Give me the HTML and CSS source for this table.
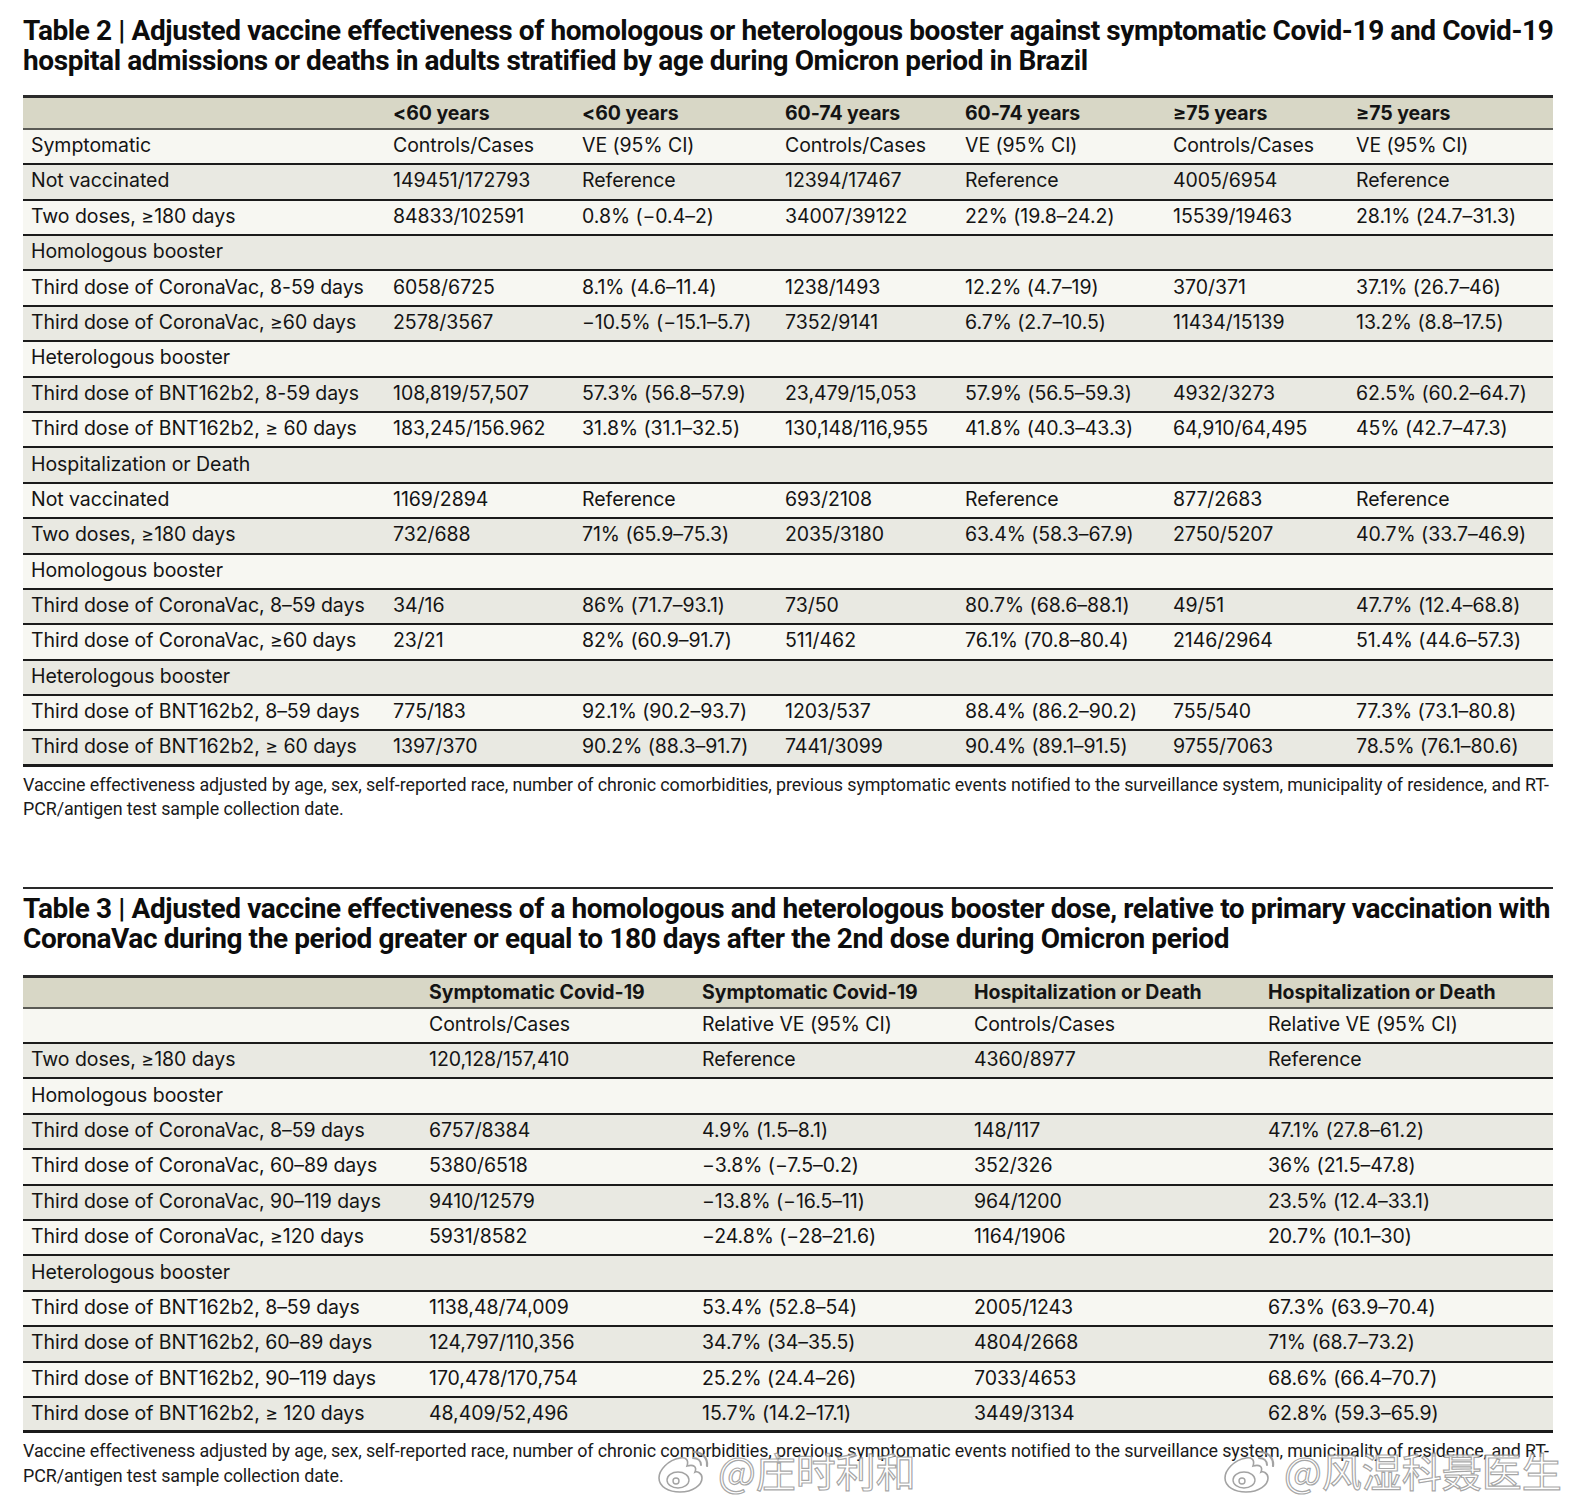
FILE: index.html
```html
<!DOCTYPE html>
<html lang="en">
<head>
<meta charset="utf-8">
<title>Tables 2 and 3</title>
<link rel="stylesheet" href="styles.css">
</head>
<body>
<div class="page">
  <section class="block block-t2">
    <h2 class="title">Table 2 | Adjusted vaccine effectiveness of homologous or heterologous booster against symptomatic Covid-19 and Covid-19<br>hospital admissions or deaths in adults stratified by age during Omicron period in Brazil</h2>
    <div class="tbl t2">
      <div class="row head"><span></span><span>&lt;60 years</span><span>&lt;60 years</span><span>60-74 years</span><span>60-74 years</span><span>≥75 years</span><span>≥75 years</span></div>
      <div class="row"><span>Symptomatic</span><span>Controls/Cases</span><span>VE (95% CI)</span><span>Controls/Cases</span><span>VE (95% CI)</span><span>Controls/Cases</span><span>VE (95% CI)</span></div>
      <div class="row"><span>Not vaccinated</span><span>149451/172793</span><span>Reference</span><span>12394/17467</span><span>Reference</span><span>4005/6954</span><span>Reference</span></div>
      <div class="row"><span>Two doses, ≥180 days</span><span>84833/102591</span><span>0.8% (−0.4–2)</span><span>34007/39122</span><span>22% (19.8–24.2)</span><span>15539/19463</span><span>28.1% (24.7–31.3)</span></div>
      <div class="row"><span>Homologous booster</span></div>
      <div class="row"><span>Third dose of CoronaVac, 8-59 days</span><span>6058/6725</span><span>8.1% (4.6–11.4)</span><span>1238/1493</span><span>12.2% (4.7–19)</span><span>370/371</span><span>37.1% (26.7–46)</span></div>
      <div class="row"><span>Third dose of CoronaVac, ≥60 days</span><span>2578/3567</span><span>−10.5% (−15.1–5.7)</span><span>7352/9141</span><span>6.7% (2.7–10.5)</span><span>11434/15139</span><span>13.2% (8.8–17.5)</span></div>
      <div class="row"><span>Heterologous booster</span></div>
      <div class="row"><span>Third dose of BNT162b2, 8-59 days</span><span>108,819/57,507</span><span>57.3% (56.8–57.9)</span><span>23,479/15,053</span><span>57.9% (56.5–59.3)</span><span>4932/3273</span><span>62.5% (60.2–64.7)</span></div>
      <div class="row"><span>Third dose of BNT162b2, ≥ 60 days</span><span>183,245/156.962</span><span>31.8% (31.1–32.5)</span><span>130,148/116,955</span><span>41.8% (40.3–43.3)</span><span>64,910/64,495</span><span>45% (42.7–47.3)</span></div>
      <div class="row"><span>Hospitalization or Death</span></div>
      <div class="row"><span>Not vaccinated</span><span>1169/2894</span><span>Reference</span><span>693/2108</span><span>Reference</span><span>877/2683</span><span>Reference</span></div>
      <div class="row"><span>Two doses, ≥180 days</span><span>732/688</span><span>71% (65.9–75.3)</span><span>2035/3180</span><span>63.4% (58.3–67.9)</span><span>2750/5207</span><span>40.7% (33.7–46.9)</span></div>
      <div class="row"><span>Homologous booster</span></div>
      <div class="row"><span>Third dose of CoronaVac, 8–59 days</span><span>34/16</span><span>86% (71.7–93.1)</span><span>73/50</span><span>80.7% (68.6–88.1)</span><span>49/51</span><span>47.7% (12.4–68.8)</span></div>
      <div class="row"><span>Third dose of CoronaVac, ≥60 days</span><span>23/21</span><span>82% (60.9–91.7)</span><span>511/462</span><span>76.1% (70.8–80.4)</span><span>2146/2964</span><span>51.4% (44.6–57.3)</span></div>
      <div class="row"><span>Heterologous booster</span></div>
      <div class="row"><span>Third dose of BNT162b2, 8–59 days</span><span>775/183</span><span>92.1% (90.2–93.7)</span><span>1203/537</span><span>88.4% (86.2–90.2)</span><span>755/540</span><span>77.3% (73.1–80.8)</span></div>
      <div class="row last"><span>Third dose of BNT162b2, ≥ 60 days</span><span>1397/370</span><span>90.2% (88.3–91.7)</span><span>7441/3099</span><span>90.4% (89.1–91.5)</span><span>9755/7063</span><span>78.5% (76.1–80.6)</span></div>
    </div>
    <p class="note">Vaccine effectiveness adjusted by age, sex, self-reported race, number of chronic comorbidities, previous symptomatic events notified to the surveillance system, municipality of residence, and RT-<br>PCR/antigen test sample collection date.</p>
  </section>

  <section class="block block-t3">
    <h2 class="title">Table 3 | Adjusted vaccine effectiveness of a homologous and heterologous booster dose, relative to primary vaccination with<br>CoronaVac during the period greater or equal to 180 days after the 2nd dose during Omicron period</h2>
    <div class="tbl t3">
      <div class="row head"><span></span><span>Symptomatic Covid-19</span><span>Symptomatic Covid-19</span><span>Hospitalization or Death</span><span>Hospitalization or Death</span></div>
      <div class="row"><span></span><span>Controls/Cases</span><span>Relative VE (95% CI)</span><span>Controls/Cases</span><span>Relative VE (95% CI)</span></div>
      <div class="row"><span>Two doses, ≥180 days</span><span>120,128/157,410</span><span>Reference</span><span>4360/8977</span><span>Reference</span></div>
      <div class="row"><span>Homologous booster</span></div>
      <div class="row"><span>Third dose of CoronaVac, 8–59 days</span><span>6757/8384</span><span>4.9% (1.5–8.1)</span><span>148/117</span><span>47.1% (27.8–61.2)</span></div>
      <div class="row"><span>Third dose of CoronaVac, 60–89 days</span><span>5380/6518</span><span>−3.8% (−7.5–0.2)</span><span>352/326</span><span>36% (21.5–47.8)</span></div>
      <div class="row"><span>Third dose of CoronaVac, 90–119 days</span><span>9410/12579</span><span>−13.8% (−16.5–11)</span><span>964/1200</span><span>23.5% (12.4–33.1)</span></div>
      <div class="row"><span>Third dose of CoronaVac, ≥120 days</span><span>5931/8582</span><span>−24.8% (−28–21.6)</span><span>1164/1906</span><span>20.7% (10.1–30)</span></div>
      <div class="row"><span>Heterologous booster</span></div>
      <div class="row"><span>Third dose of BNT162b2, 8–59 days</span><span>1138,48/74,009</span><span>53.4% (52.8–54)</span><span>2005/1243</span><span>67.3% (63.9–70.4)</span></div>
      <div class="row"><span>Third dose of BNT162b2, 60–89 days</span><span>124,797/110,356</span><span>34.7% (34–35.5)</span><span>4804/2668</span><span>71% (68.7–73.2)</span></div>
      <div class="row"><span>Third dose of BNT162b2, 90–119 days</span><span>170,478/170,754</span><span>25.2% (24.4–26)</span><span>7033/4653</span><span>68.6% (66.4–70.7)</span></div>
      <div class="row last"><span>Third dose of BNT162b2, ≥ 120 days</span><span>48,409/52,496</span><span>15.7% (14.2–17.1)</span><span>3449/3134</span><span>62.8% (59.3–65.9)</span></div>
    </div>
    <p class="note">Vaccine effectiveness adjusted by age, sex, self-reported race, number of chronic comorbidities, previous symptomatic events notified to the surveillance system, municipality of residence, and RT-<br>PCR/antigen test sample collection date.</p>
  </section>

  <div class="wm wm1">
    <svg class="wb" viewBox="0 0 56 48" width="56" height="48" aria-hidden="true">
      <path d="M24 12 C12 14 3 24 3 32 C3 41 13 46 24 46 C37 46 46 39 46 32 C46 27 41 25 39 26 C41 21 38 18 31 20 C33 14 30 11 24 12 Z" fill="#fff" stroke="#9a9a9a" stroke-width="1.6"/>
      <ellipse cx="22" cy="34" rx="11" ry="8" fill="#fff" stroke="#9a9a9a" stroke-width="1.4"/>
      <circle cx="20" cy="35" r="3" fill="none" stroke="#9a9a9a" stroke-width="1.4"/>
      <path d="M38 6 C46 6 52 12 51 20" fill="none" stroke="#9a9a9a" stroke-width="2.2" stroke-linecap="round"/>
      <path d="M37 12 C42 12 45 15 45 19" fill="none" stroke="#9a9a9a" stroke-width="2" stroke-linecap="round"/>
    </svg>
    <span class="wmtext">@庄时利和</span>
  </div>
  <div class="wm wm2">
    <svg class="wb" viewBox="0 0 56 48" width="56" height="48" aria-hidden="true">
      <path d="M24 12 C12 14 3 24 3 32 C3 41 13 46 24 46 C37 46 46 39 46 32 C46 27 41 25 39 26 C41 21 38 18 31 20 C33 14 30 11 24 12 Z" fill="#fff" stroke="#9a9a9a" stroke-width="1.6"/>
      <ellipse cx="22" cy="34" rx="11" ry="8" fill="#fff" stroke="#9a9a9a" stroke-width="1.4"/>
      <circle cx="20" cy="35" r="3" fill="none" stroke="#9a9a9a" stroke-width="1.4"/>
      <path d="M38 6 C46 6 52 12 51 20" fill="none" stroke="#9a9a9a" stroke-width="2.2" stroke-linecap="round"/>
      <path d="M37 12 C42 12 45 15 45 19" fill="none" stroke="#9a9a9a" stroke-width="2" stroke-linecap="round"/>
    </svg>
    <span class="wmtext">@风湿科聂医生</span>
  </div>
</div>
</body>
</html>
```

FILE: styles.css
```css
* { box-sizing: border-box; }
html, body { margin: 0; padding: 0; background: #fff; }
body {
  color: #141414;
  font-family: "Inter", "Noto Sans", sans-serif;
}
.page {
  position: relative;
  width: 1586px;
  height: 1512px;
  padding: 16px 33px 0 23px;
  overflow: hidden;
}
.title {
  margin: 0;
  font-family: "Roboto", "Liberation Sans", sans-serif;
  font-weight: 700;
  font-size: 28px;
  line-height: 30.4px;
  letter-spacing: -0.4px;
  color: #0d0d0d;
  white-space: nowrap;
}
.block-t2 .title { margin-bottom: 18px; }
.block-t3 {
  margin-top: 65px;
  border-top: 2px solid #2a2a2a;
  padding-top: 5px;
}
.block-t3 .title { margin-bottom: 20px; }

.tbl {
  width: 1530px;
  border-top: 3px solid #2b2b2b;
}
.row {
  display: grid;
  height: 35.4px;
  padding-bottom: 3px;
  align-items: center;
  border-bottom: 2px solid #1b1b1b;
  font-size: 19.5px;
  letter-spacing: -0.05px;
  font-weight: 400;
  white-space: nowrap;
}
.row > span { padding-left: 8px; }
.t2 .row { grid-template-columns: 362px 189px 203px 180px 208px 183px 205px; }
.t3 .row { grid-template-columns: 398px 273px 272px 294px 293px; }
.row:nth-child(even) { background: #f7f7f2; }
.row:nth-child(odd) { background: #e9e9e2; }
.row.head {
  height: 32px;
  padding-bottom: 0;
  background: #d8d7c6;
  border-bottom: 2px solid #5a5a55;
  font-weight: 700;
}
.t3 .row.head { height: 31px; }
.row.last { border-bottom: 3px solid #1b1b1b; }

.note {
  margin: 6px 0 0;
  font-family: "Roboto", "Liberation Sans", sans-serif;
  font-size: 17.9px;
  line-height: 24.5px;
  letter-spacing: -0.1px;
  color: #1a1a1a;
  white-space: nowrap;
}

.wm {
  position: absolute;
  display: flex;
  align-items: center;
  gap: 6px;
  opacity: 0.9;
}
.wm1 { left: 656px; top: 1446px; }
.wm2 { left: 1222px; top: 1446px; }
.wmtext {
  font-family: "Noto Sans CJK SC", sans-serif;
  font-size: 40px;
  line-height: 48px;
  color: rgba(255, 255, 255, 0.85);
  -webkit-text-stroke: 1.2px rgba(140, 140, 140, 0.85);
}
```
